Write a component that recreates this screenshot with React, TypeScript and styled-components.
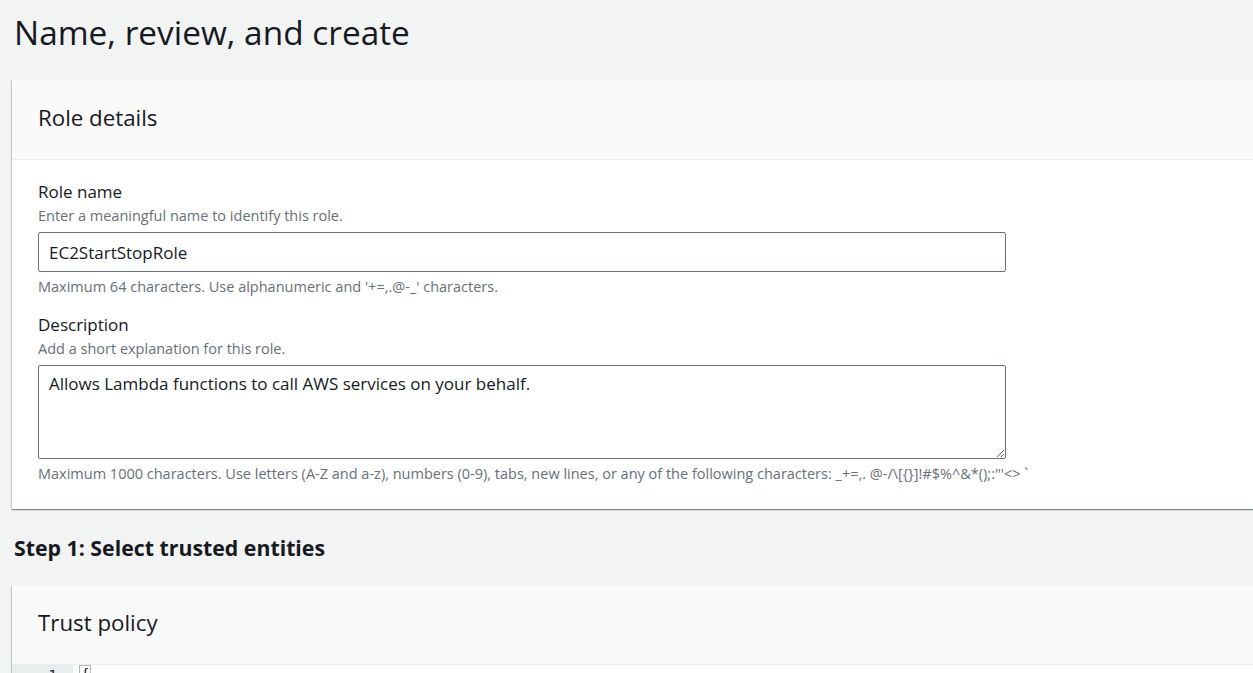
import React from 'react';
import styled, { createGlobalStyle } from 'styled-components';

const GlobalStyle = createGlobalStyle`
  html, body {
    margin: 0;
    padding: 0;
    overflow: hidden;
    background: #f2f3f3;
  }
  body {
    font-family: 'Open Sans', 'Noto Sans', Arial, sans-serif;
    color: #16191f;
  }
`;

const Page = styled.div`
  width: 1320px;
  padding: 12px 0 0 12px;
  box-sizing: border-box;
`;

const PageTitle = styled.h1`
  margin: 0 0 0 2px;
  font-size: 33.4px;
  font-weight: 400;
  line-height: 40px;
  color: #16191f;
`;

const StepTitle = styled.h2`
  margin: 0 0 0 2px;
  font-size: 21.3px;
  font-weight: 700;
  line-height: 30px;
  color: #16191f;
`;

const Card = styled.section<{ $top: number }>`
  margin-top: ${(p) => p.$top}px;
  background: #fff;
  box-shadow: 0 1px 1px 0 rgba(0, 28, 36, 0.3), 1px 1px 1px 0 rgba(0, 28, 36, 0.15),
    -1px 1px 1px 0 rgba(0, 28, 36, 0.15);
`;

const CardHeader = styled.div`
  background: #fafafa;
  border-bottom: 1px solid #eaeded;
  height: 80px;
  box-sizing: border-box;
  display: flex;
  align-items: center;
  padding: 0 26px 5px;
`;

const CardTitle = styled.h2`
  margin: 0;
  font-size: 22.3px;
  font-weight: 400;
  color: #16191f;
`;

const CardBody = styled.div`
  padding: 20px 26px 19px;
  display: flex;
  flex-direction: column;
  gap: 10px;
`;

const Field = styled.div`
  display: flex;
  flex-direction: column;
`;

const Label = styled.label`
  font-size: 17px;
  line-height: 24px;
  color: #16191f;
`;

const Hint = styled.div<{ $gap?: number }>`
  font-size: 14.5px;
  line-height: 24px;
  color: #687078;
  margin-top: ${(p) => p.$gap ?? 0}px;
  margin-bottom: 4px;
`;

const TextInput = styled.input`
  width: 968px;
  height: 40px;
  box-sizing: border-box;
  border: 1px solid #687078;
  border-radius: 2px;
  padding: 0 10px;
  font-family: inherit;
  font-size: 17px;
  color: #16191f;
  background: #fff;
  outline: none;
`;

const TextArea = styled.textarea`
  width: 968px;
  height: 94px;
  box-sizing: border-box;
  border: 1px solid #687078;
  border-radius: 2px;
  padding: 6px 10px;
  font-family: inherit;
  font-size: 17px;
  line-height: 24px;
  color: #16191f;
  background: #fff;
  outline: none;
  resize: vertical;
  display: block;
`;

const Section = styled.div`
  margin-top: 24px;
`;

const Editor = styled.div`
  display: flex;
  height: 40px;
  font-family: 'DejaVu Sans Mono', monospace;
  font-size: 14px;
`;

const Gutter = styled.div`
  width: 61px;
  background: #eaeded;
  text-align: right;
  padding: 2px 16px 0 0;
  box-sizing: border-box;
  color: #16191f;
`;

const Code = styled.div`
  padding: 1px 0 0 6px;
`;

const Bracket = styled.span`
  border: 1px solid #aab7b8;
  padding: 0 1px;
`;

export default function App() {
  return (
    <>
      <GlobalStyle />
      <Page>
        <PageTitle>Name, review, and create</PageTitle>
        <Card $top={28}>
          <CardHeader>
            <CardTitle>Role details</CardTitle>
          </CardHeader>
          <CardBody>
            <Field>
              <Label>Role name</Label>
              <Hint>Enter a meaningful name to identify this role.</Hint>
              <TextInput defaultValue="EC2StartStopRole" />
              <Hint $gap={3}>Maximum 64 characters. Use alphanumeric and '+=,.@-_' characters.</Hint>
            </Field>
            <Field>
              <Label>Description</Label>
              <Hint>Add a short explanation for this role.</Hint>
              <TextArea defaultValue="Allows Lambda functions to call AWS services on your behalf." />
              <Hint $gap={3}>
                Maximum 1000 characters. Use letters (A-Z and a-z), numbers (0-9), tabs, new lines, or any of the following characters: _+=,. @-/\[{'{}'}]!#$%^&amp;*();:"'&lt;&gt; `
              </Hint>
            </Field>
          </CardBody>
        </Card>
        <Section>
          <StepTitle>Step 1: Select trusted entities</StepTitle>
          <Card $top={22}>
            <CardHeader>
              <CardTitle>Trust policy</CardTitle>
            </CardHeader>
            <Editor>
              <Gutter>1</Gutter>
              <Code>
                <Bracket>{'{'}</Bracket>
              </Code>
            </Editor>
          </Card>
        </Section>
      </Page>
    </>
  );
}
